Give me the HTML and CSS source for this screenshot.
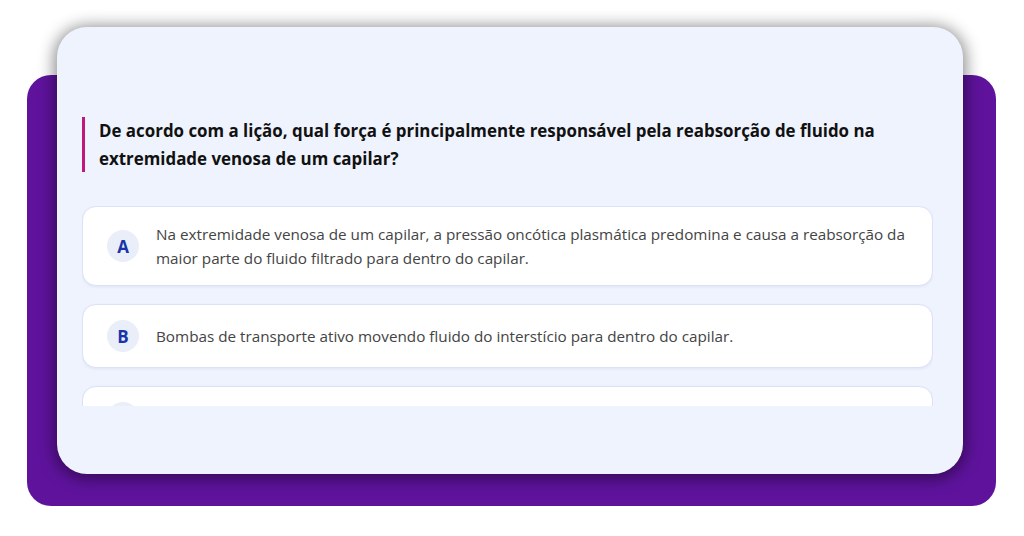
FILE: index.html
```html
<!DOCTYPE html>
<html lang="pt">
<head>
<meta charset="utf-8">
<link rel="stylesheet" href="styles.css">
</head>
<body>
<div class="stage">
  <div class="card">
    <div class="question">De acordo com a lição, qual força é principalmente responsável pela reabsorção de fluido na extremidade venosa de um capilar?</div>
    <div class="options">
      <div class="option">
        <span class="badge">A</span>
        <span class="text">Na extremidade venosa de um capilar, a pressão oncótica plasmática predomina e causa a reabsorção da maior parte do fluido filtrado para dentro do capilar.</span>
      </div>
      <div class="option">
        <span class="badge">B</span>
        <span class="text">Bombas de transporte ativo movendo fluido do interstício para dentro do capilar.</span>
      </div>
      <div class="option">
        <span class="badge">C</span>
        <span class="text">A pressão hidrostática capilar empurra o fluido de volta para o vaso.</span>
      </div>
    </div>
  </div>
</div>
</body>
</html>
```

FILE: styles.css
```css
* { box-sizing: border-box; }
html, body { margin: 0; padding: 0; background: #ffffff; }
body {
  width: 1024px;
  height: 536px;
  overflow: hidden;
  font-family: "Open Sans", "Noto Sans", sans-serif;
  padding-top: 75px;
}
.stage {
  margin: 0 28px 0 27px;
  height: 431px;
  background: #5f139d;
  border-radius: 24px;
  padding: 0 33px 0 30px;
}
.card {
  position: relative;
  top: -48px;
  height: 447px;
  background: #eff3fe;
  border-radius: 30px;
  box-shadow: 0 2px 16px 3px rgba(0, 0, 0, 0.45);
  padding: 90px 30px 0 25px;
}
.question {
  border-left: 3px solid #c0177c;
  padding-left: 14px;
  font-size: 16.9px;
  font-weight: 700;
  line-height: 27.5px;
  color: #111111;
}
.options {
  margin-top: 34px;
  height: 200px;
  overflow: hidden;
  display: flex;
  flex-direction: column;
  gap: 18px;
}
.option {
  flex: none;
  display: flex;
  align-items: center;
  gap: 16px;
  background: #ffffff;
  border: 1px solid #dbe2f6;
  border-radius: 14px;
  padding: 15px 20px 15px 24px;
  box-shadow: 0 1px 3px rgba(40, 60, 140, 0.08);
}
.badge {
  flex: none;
  width: 32px;
  height: 32px;
  border-radius: 50%;
  background: #e9eef8;
  color: #1a34a8;
  font-weight: 700;
  font-size: 17px;
  display: flex;
  align-items: center;
  justify-content: center;
}
.text {
  font-size: 15.25px;
  line-height: 24px;
  color: #444444;
  padding-left: 1px;
}
```
